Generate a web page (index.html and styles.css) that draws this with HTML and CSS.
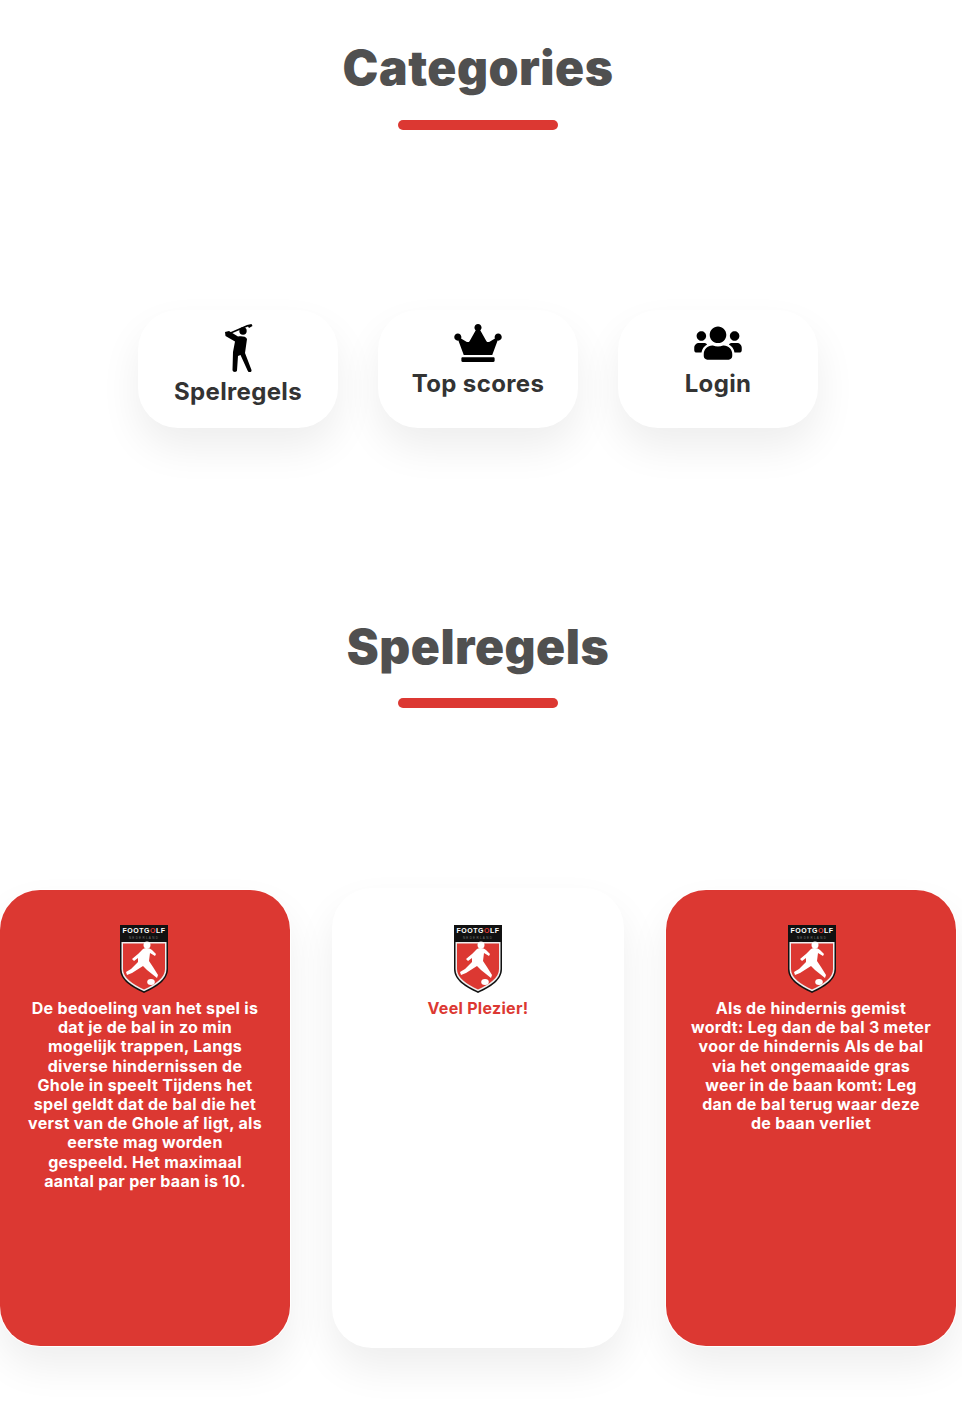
FILE: index.html
```html
<!DOCTYPE html>
<html lang="nl">
<head>
    <meta charset="UTF-8">
    <meta name="viewport" content="width=device-width, initial-scale=1.0">
    <title>Footgolf</title>
    <link rel="stylesheet" href="styles.css">
</head>
<body>
    <main class="page">
        <section class="categories">
            <h1 class="heading">Categories</h1>
            <div class="heading-line"></div>
            <div class="tiles">
                <a class="tile">
                    <svg class="tile-golfer" viewBox="0 0 30 48">
                        <circle cx="20" cy="7" r="3.700"/>
                        <path d="M5 9.300 24 1l4.500-1 1 2-3.500 2-1-1.500L6 10.500z"/>
                        <path d="M2 8l4-1 9 5.500c3-.5 8-.5 9 2.500l-2 14 6.500 17c.5 2.500-3 3-3.700 1L17.500 31 15 32l-1 14.500c0 2-4.500 2-4.500-.5l.5-18 2-10.500L2.500 12z"/>
                    </svg>
                    <span>Spelregels</span>
                </a>
                <a class="tile">
                    <svg class="tile-icon" viewBox="0 0 640 512"><path d="M528 448H112c-8.800 0-16 7.200-16 16v32c0 8.800 7.200 16 16 16h416c8.800 0 16-7.200 16-16v-32c0-8.800-7.200-16-16-16zm64-320c-26.500 0-48 21.500-48 48 0 7.100 1.600 13.700 4.400 19.800L476 239.200c-15.400 9.200-35.300 4-44.200-11.600L350.300 85C361 76.200 368 63 368 48c0-26.500-21.500-48-48-48s-48 21.500-48 48c0 15 7 28.200 17.700 37l-81.500 142.600c-8.900 15.600-28.900 20.800-44.200 11.600l-72.300-43.400c2.700-6 4.400-12.700 4.400-19.800 0-26.500-21.500-48-48-48S0 149.500 0 176s21.500 48 48 48c2.600 0 5.200-.4 7.700-.8L128 416h384l72.300-192.800c2.500.4 5.100.8 7.700.8 26.500 0 48-21.500 48-48s-21.500-48-48-48z"/></svg>
                    <span>Top scores</span>
                </a>
                <a class="tile">
                    <svg class="tile-icon" viewBox="0 0 640 512"><path d="M96 224c35.300 0 64-28.700 64-64s-28.700-64-64-64-64 28.700-64 64 28.700 64 64 64zm448 0c35.300 0 64-28.700 64-64s-28.700-64-64-64-64 28.700-64 64 28.700 64 64 64zm32 32h-64c-17.600 0-33.500 7.100-45.100 18.600 40.300 22.100 68.900 62 75.100 109.400h66c17.700 0 32-14.300 32-32v-32c0-35.300-28.700-64-64-64zm-256 0c61.900 0 112-50.100 112-112S381.900 32 320 32 208 82.100 208 144s50.100 112 112 112zm76.800 32h-8.300c-20.800 10-43.900 16-68.500 16s-47.600-6-68.500-16h-8.300C179.600 288 128 339.600 128 403.200V432c0 26.500 21.500 48 48 48h288c26.500 0 48-21.500 48-48v-28.800c0-63.600-51.600-115.200-115.200-115.200zm-223.700-13.400C161.500 263.100 145.600 256 128 256H64c-35.300 0-64 28.700-64 64v32c0 17.700 14.300 32 32 32h65.900c6.300-47.400 34.900-87.300 75.200-109.400z"/></svg>
                    <span>Login</span>
                </a>
            </div>
        </section>

        <section class="rules">
            <h1 class="heading">Spelregels</h1>
            <div class="heading-line"></div>
            <div class="cards">
                <article class="card card-red">
                    <svg class="card-logo" viewBox="0 0 48 68">
                        <path d="M0 0h48v44c0 11-11 18-24 24C11 62 0 55 0 44z" fill="#111"/>
                        <path d="M1.500 17h45v27c0 10-10 16.500-22.500 22.300C11.500 60.500 1.500 54 1.500 44z" fill="#eee"/>
                        <path d="M3 18.500h42V44c0 9-9.500 15-21 20.500C12.500 59 3 53 3 44z" fill="#dc3832"/>
                        <circle cx="27" cy="20" r="3.500" fill="#fff"/>
                        <path d="M23 24c3-2 7-1 9 1l4 4-1 2-5-3-1 8 4 6 5 8-1 3-10-8-4-4-11 7-5 2-1-3 5-3 7-7v-4l-4 3-2-2 6-5z" fill="#fff"/>
                        <ellipse cx="31" cy="57" rx="3.800" ry="3" fill="#fff"/>
                        <text x="24" y="8" class="logo-name">FOOTG<tspan class="logo-dot">O</tspan>LF</text>
                        <text x="24" y="13.500" class="logo-sub">NEDERLAND</text>
                    </svg>
                    <p>De bedoeling van het spel is dat je de bal in zo min mogelijk trappen, Langs diverse hindernissen de Ghole in speelt Tijdens het spel geldt dat de bal die het verst van de Ghole af ligt, als eerste mag worden gespeeld. Het maximaal aantal par per baan is 10.</p>
                </article>
                <article class="card card-white">
                    <svg class="card-logo" viewBox="0 0 48 68">
                        <path d="M0 0h48v44c0 11-11 18-24 24C11 62 0 55 0 44z" fill="#111"/>
                        <path d="M1.500 17h45v27c0 10-10 16.500-22.500 22.300C11.500 60.500 1.500 54 1.500 44z" fill="#eee"/>
                        <path d="M3 18.500h42V44c0 9-9.500 15-21 20.500C12.500 59 3 53 3 44z" fill="#dc3832"/>
                        <circle cx="27" cy="20" r="3.500" fill="#fff"/>
                        <path d="M23 24c3-2 7-1 9 1l4 4-1 2-5-3-1 8 4 6 5 8-1 3-10-8-4-4-11 7-5 2-1-3 5-3 7-7v-4l-4 3-2-2 6-5z" fill="#fff"/>
                        <ellipse cx="31" cy="57" rx="3.800" ry="3" fill="#fff"/>
                        <text x="24" y="8" class="logo-name">FOOTG<tspan class="logo-dot">O</tspan>LF</text>
                        <text x="24" y="13.500" class="logo-sub">NEDERLAND</text>
                    </svg>
                    <p>Veel Plezier!</p>
                </article>
                <article class="card card-red">
                    <svg class="card-logo" viewBox="0 0 48 68">
                        <path d="M0 0h48v44c0 11-11 18-24 24C11 62 0 55 0 44z" fill="#111"/>
                        <path d="M1.500 17h45v27c0 10-10 16.500-22.500 22.300C11.500 60.500 1.500 54 1.500 44z" fill="#eee"/>
                        <path d="M3 18.500h42V44c0 9-9.500 15-21 20.500C12.500 59 3 53 3 44z" fill="#dc3832"/>
                        <circle cx="27" cy="20" r="3.500" fill="#fff"/>
                        <path d="M23 24c3-2 7-1 9 1l4 4-1 2-5-3-1 8 4 6 5 8-1 3-10-8-4-4-11 7-5 2-1-3 5-3 7-7v-4l-4 3-2-2 6-5z" fill="#fff"/>
                        <ellipse cx="31" cy="57" rx="3.800" ry="3" fill="#fff"/>
                        <text x="24" y="8" class="logo-name">FOOTG<tspan class="logo-dot">O</tspan>LF</text>
                        <text x="24" y="13.500" class="logo-sub">NEDERLAND</text>
                    </svg>
                    <p>Als de hindernis gemist wordt: Leg dan de bal 3 meter voor de hindernis Als de bal via het ongemaaide gras weer in de baan komt: Leg dan de bal terug waar deze de baan verliet</p>
                </article>
            </div>
        </section>
    </main>
</body>
</html>
```

FILE: styles.css
```css
* {
    box-sizing: border-box;
}
html, body {
    margin: 0;
    background-color: #fff;
}
body {
    font-family: Inter, "Liberation Sans", sans-serif;
    overflow-x: hidden;
}
.page {
    width: 956px;
    height: 1404px;
}
.heading {
    margin: 0;
    font-size: 48px;
    line-height: 72px;
    font-weight: 900;
    letter-spacing: 0.5px;
    color: #505050;
    text-align: center;
}
.heading-line {
    width: 160px;
    height: 10px;
    margin: 15px auto 0;
    border-radius: 5px;
    background-color: #dc3832;
}
.categories {
    padding-top: 32px;
}
.categories .heading-line {
    margin-top: 16px;
}
.tiles {
    display: flex;
    justify-content: center;
    gap: 40px;
    margin-top: 180px;
}
.tile {
    display: flex;
    flex-direction: column;
    align-items: center;
    width: 200px;
    height: 118px;
    padding-top: 14px;
    border-radius: 40px;
    background-color: #fff;
    box-shadow: 0 20px 40px rgba(0, 0, 0, 0.07);
    color: #333;
    font-size: 24px;
    line-height: 36px;
    font-weight: 700;
    letter-spacing: 0.35px;
}
.tile svg {
    display: block;
    fill: #000;
}
.tile-icon {
    width: 48px;
    height: 38px;
    margin-bottom: 4px;
}
.tile-golfer {
    width: 30px;
    height: 48px;
    margin-bottom: 2px;
}
.rules {
    margin-top: 183px;
}
.cards {
    display: flex;
    align-items: center;
    justify-content: space-between;
    margin-top: 180px;
}
.card {
    display: flex;
    flex-direction: column;
    align-items: center;
    padding: 35px 24px 0;
    border-radius: 40px;
    box-shadow: 0 20px 40px rgba(0, 0, 0, 0.07);
    text-align: center;
}
.card p {
    margin: 6px 0 0;
    font-size: 16px;
    line-height: 19.2px;
    font-weight: 700;
    letter-spacing: 0.3px;
}
.card-red {
    width: 290px;
    height: 456px;
    background-color: #dc3832;
    box-shadow: 0 0 0 1px #fff, 0 20px 40px rgba(0, 0, 0, 0.07);
    color: #fff;
}
.card-red:first-child {
    padding-left: 26px;
    padding-right: 26px;
}
.card-white {
    width: 292px;
    height: 460px;
    padding-top: 37px;
    background-color: #fff;
    color: #dc3832;
}
.card-logo {
    display: block;
    flex: none;
    width: 48px;
    height: 68px;
}
.card:first-child .card-logo {
    margin-right: 2px;
}
.card:last-child .card-logo {
    margin-left: 2px;
}
.logo-name {
    fill: #fff;
    font-family: "Liberation Sans", sans-serif;
    font-size: 7px;
    font-weight: 700;
    letter-spacing: 0.5px;
    text-anchor: middle;
}
.logo-dot {
    fill: #dc3832;
}
.logo-sub {
    fill: #777;
    font-family: "Liberation Sans", sans-serif;
    font-size: 3px;
    letter-spacing: 1.300px;
    text-anchor: middle;
}
```
